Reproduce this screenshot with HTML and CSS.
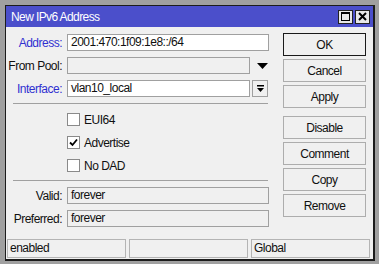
FILE: index.html
```html
<!DOCTYPE html>
<html lang="en">
<head>
  <meta charset="UTF-8">
  <title>New IPv6 Address</title>
  <link rel="stylesheet" href="styles.css">
</head>
<body>
  <div class="window">
    <div class="title-bar">
      <span class="title">New IPv6 Address</span>
      <div class="title-buttons">
        <span class="tb-btn"><span class="max-icon"></span></span>
        <span class="tb-btn">
          <svg width="9" height="9" viewBox="0 0 9 9"><path d="M1 1L8 8M8 1L1 8" stroke="#000" stroke-width="2"/></svg>
        </span>
      </div>
    </div>

    <div class="content">
      <div class="form">
        <div class="row">
          <label class="field-label active">Address:</label>
          <div class="input">2001:470:1f09:1e8::/64</div>
        </div>
        <div class="row">
          <label class="field-label">From Pool:</label>
          <div class="input short disabled"></div>
          <span class="drop-arrow">
            <svg width="11" height="6" viewBox="0 0 11 6"><path d="M0 0H11L5.5 6Z" fill="#000"/></svg>
          </span>
        </div>
        <div class="row">
          <label class="field-label active">Interface:</label>
          <div class="input short">vlan10_local</div>
          <span class="drop-btn">
            <svg width="7" height="8" viewBox="0 0 7 8"><path d="M0 0H7V1.5H0Z M0 3H7L3.5 7Z" fill="#000"/></svg>
          </span>
        </div>

        <div class="separator sep-top"></div>

        <div class="checks">
          <div class="check"><span class="box"></span>EUI64</div>
          <div class="check">
            <span class="box">
              <svg width="9" height="9" viewBox="0 0 9 9"><path d="M1 4.5L3.5 7L8 1.5" stroke="#000" stroke-width="1.8" fill="none"/></svg>
            </span>Advertise
          </div>
          <div class="check"><span class="box"></span>No DAD</div>
        </div>

        <div class="separator sep-bottom"></div>

        <div class="row">
          <label class="field-label">Valid:</label>
          <div class="input disabled">forever</div>
        </div>
        <div class="row tight">
          <label class="field-label">Preferred:</label>
          <div class="input disabled">forever</div>
        </div>
      </div>

      <div class="buttons">
        <button class="btn default">OK</button>
        <button class="btn">Cancel</button>
        <button class="btn">Apply</button>
        <button class="btn group">Disable</button>
        <button class="btn">Comment</button>
        <button class="btn">Copy</button>
        <button class="btn">Remove</button>
      </div>
    </div>

    <div class="status-bar">
      <div class="status-cell">enabled</div>
      <div class="status-cell"></div>
      <div class="status-cell">Global</div>
    </div>
  </div>
</body>
</html>
```

FILE: styles.css
```css
:root {
  --frame-grey: #a0a0a0;
  --title-blue: #4b4fcb;
  --panel: #f0f0f0;
  --edge: #a0a0a0;
  --label-blue: #3030d0;
  --text: #101010;
}

body {
  margin: 0;
  background-color: var(--frame-grey);
  font-family: 'Liberation Sans', Arial, sans-serif;
  font-size: 12px;
  letter-spacing: -0.5px;
  color: var(--text);
}

.window {
  margin: 5px 0 0 5px;
  width: 367px;
  height: 253px;
  border-style: solid;
  border-color: #1c1c1c;
  border-width: 1px 2px 2px 1px;
  background: var(--panel);
  display: flex;
  flex-direction: column;
}

.title-bar {
  height: 21px;
  background: var(--title-blue);
  display: flex;
  align-items: center;
  justify-content: space-between;
  padding: 0 3px 0 5px;
}

.title {
  color: #fff;
  font-size: 12px;
  letter-spacing: -0.6px;
}

.title-buttons {
  display: flex;
  gap: 2px;
}

.tb-btn {
  width: 13px;
  height: 12px;
  border: 1px solid #222;
  background: #e8e8e8;
  display: flex;
  align-items: center;
  justify-content: center;
}

.max-icon {
  width: 7px;
  height: 6px;
  border: 1px solid #000;
  border-top-width: 2px;
}

.content {
  display: flex;
  padding-top: 6px;
  height: 203px;
}

.form {
  width: 277px;
  padding-top: 1px;
}

.row {
  display: flex;
  align-items: center;
  height: 17px;
  margin-bottom: 6px;
}

.row.tight {
  margin-bottom: 0;
}

.field-label {
  width: 56px;
  text-align: right;
  margin-right: 5px;
}

.field-label.active {
  color: var(--label-blue);
}

.input {
  width: 197px;
  height: 15px;
  line-height: 15px;
  border: 1px solid var(--edge);
  background: #fff;
  padding-left: 3px;
  white-space: nowrap;
}

.input.short {
  width: 178px;
}

.input.disabled {
  background: var(--panel);
}

.drop-arrow {
  width: 16px;
  margin-left: 4px;
  display: flex;
  justify-content: center;
}

.drop-btn {
  width: 14px;
  height: 15px;
  margin-left: 2px;
  border: 1px solid var(--edge);
  background: var(--panel);
  display: flex;
  align-items: center;
  justify-content: center;
}

.separator {
  margin-left: 7px;
  width: 255px;
  height: 1px;
  background: var(--edge);
}

.sep-top {
  margin-top: 1px;
}

.checks {
  padding: 9px 0 8px 61px;
  display: flex;
  flex-direction: column;
  gap: 10px;
}

.check {
  display: flex;
  align-items: center;
  height: 13px;
}

.box {
  width: 11px;
  height: 11px;
  border: 1px solid #8a8a8a;
  background: #fff;
  margin-right: 4px;
  display: flex;
  align-items: center;
  justify-content: center;
}

.sep-bottom {
  margin-bottom: 6px;
}

.buttons {
  width: 83px;
  display: flex;
  flex-direction: column;
  gap: 3px;
}

.btn {
  height: 23px;
  border: 1px solid #adadad;
  background: var(--panel);
  font-family: inherit;
  font-size: 12px;
  letter-spacing: -0.5px;
  color: var(--text);
  padding: 0;
}

.btn.default {
  border-color: #1a1a1a;
}

.btn.group {
  margin-top: 5px;
}

.status-bar {
  display: flex;
  gap: 3px;
  margin: 3px 0 0 1px;
  width: 363px;
}

.status-cell {
  flex: 1;
  height: 17px;
  line-height: 17px;
  border: 1px solid #b4b4b4;
  padding-left: 2px;
}
```
